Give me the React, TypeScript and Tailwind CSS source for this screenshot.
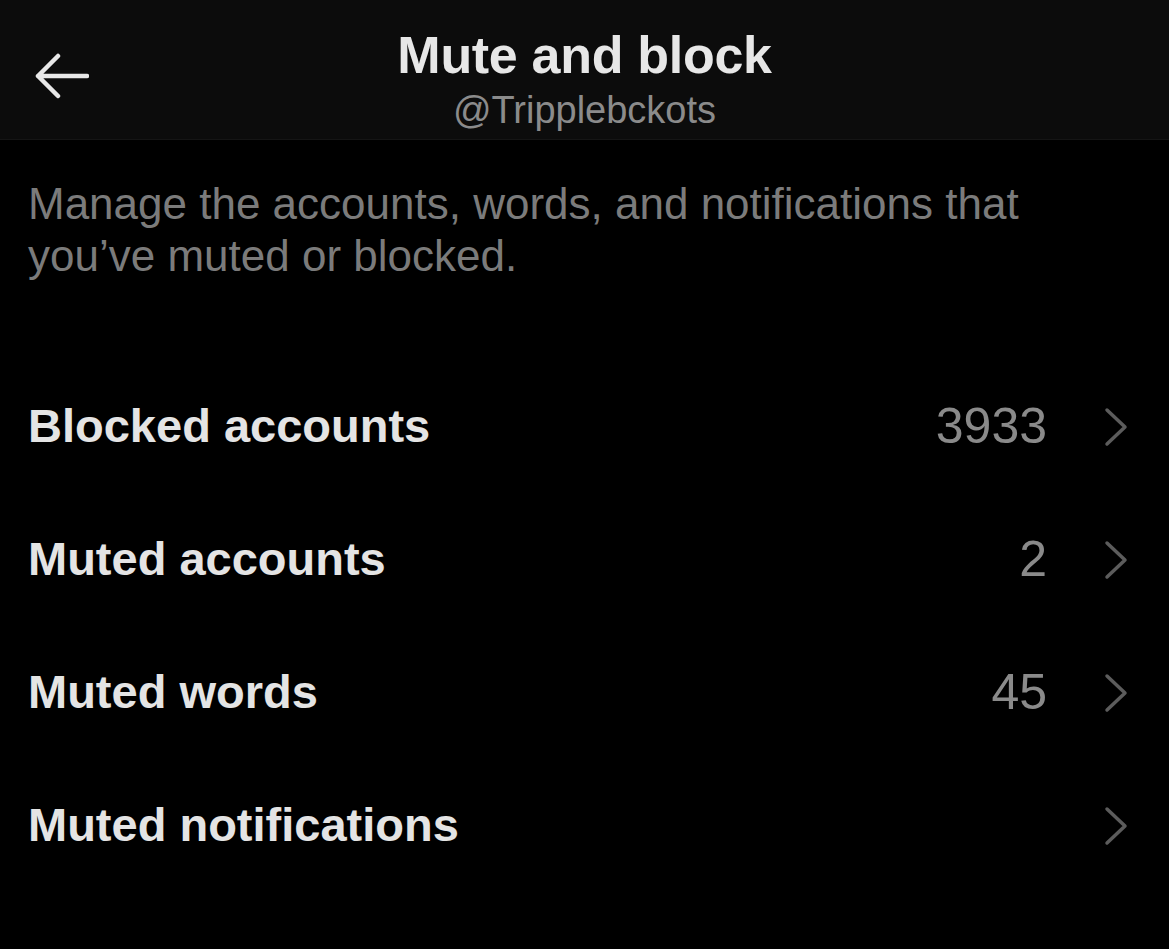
const rows = [
  { label: 'Blocked accounts', count: '3933' },
  { label: 'Muted accounts', count: '2' },
  { label: 'Muted words', count: '45' },
  { label: 'Muted notifications', count: '' },
];

const Chevron = () => (
  <svg width="26" height="40" viewBox="0 0 26 40" fill="none">
    <path d="M4 3 L22 20 L4 37" stroke="#5c5c5c" strokeWidth="3.5" strokeLinecap="round" strokeLinejoin="round" />
  </svg>
);

const App = () => {
  return (
    <div className="w-[1169px] h-[949px] bg-black overflow-hidden" style={{ fontFamily: '"Liberation Sans", Arial, sans-serif' }}>
      <div className="relative h-[140px] bg-[#0c0c0c] border-b border-[#151515] flex flex-col items-center">
        <div className="absolute left-[33px] top-[52px]">
          <svg width="56" height="48" viewBox="0 0 56 48" fill="none">
            <path d="M54 24 H5 M25 4 L5 24 L25 44" stroke="#e8e8e8" strokeWidth="4.5" strokeLinecap="round" strokeLinejoin="round" />
          </svg>
        </div>
        <div className="mt-[20px] text-[52px] leading-[70px] font-bold text-[#e7e7e7] tracking-[-0.3px]">Mute and block</div>
        <div className="mt-[-2px] text-[38px] leading-[44px] text-[#8b8b8b]">@Tripplebckots</div>
      </div>
      <div className="px-[28px] pt-[38px] text-[44px] leading-[52px] text-[#7b7b7b]">
        Manage the accounts, words, and notifications that
        <br />
        you’ve muted or blocked.
      </div>
      <div className="mt-[78px] flex flex-col">
        {rows.map((r) => (
          <div key={r.label} className="h-[133px] flex items-center pl-[28px] pr-[40px]">
            <div className="flex-1 text-[47px] font-bold text-[#e4e4e4]">{r.label}</div>
            <div className="text-[50px] text-[#8a8a8a] mr-[56px]">{r.count}</div>
            <Chevron />
          </div>
        ))}
      </div>
    </div>
  );
};

export default App;
